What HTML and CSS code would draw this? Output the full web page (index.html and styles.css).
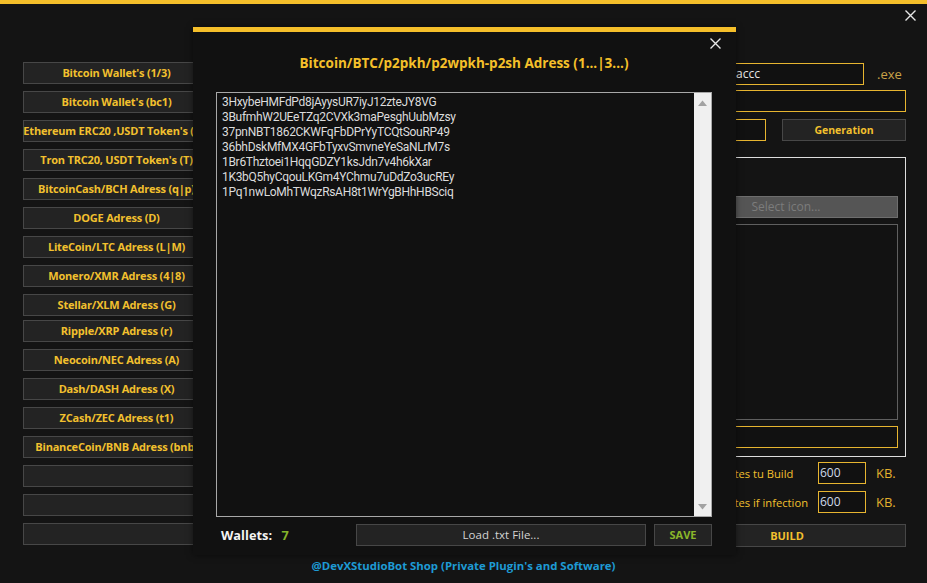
FILE: index.html
```html
<!DOCTYPE html>
<html lang="en">
<head>
<meta charset="utf-8">
<title>Builder</title>
<link rel="stylesheet" href="styles.css">
</head>
<body>
<div class="app">
  <header class="titlebar">
    <span class="win-close"><svg width="11" height="11" viewBox="0 0 11 11"><path d="M0.5 0.5 L10.5 10.5 M10.5 0.5 L0.5 10.5" stroke="#e6e6e6" stroke-width="1.4"/></svg></span>
  </header>
  <main class="content">
    <nav class="coins">
      <div class="coin">Bitcoin Wallet's (1/3)</div>
      <div class="coin">Bitcoin Wallet's (bc1)</div>
      <div class="coin">Ethereum ERC20 ,USDT Token's (0x)</div>
      <div class="coin">Tron TRC20, USDT Token's (T)</div>
      <div class="coin">BitcoinCash/BCH Adress (q|p)</div>
      <div class="coin">DOGE Adress (D)</div>
      <div class="coin">LiteCoin/LTC Adress (L|M)</div>
      <div class="coin">Monero/XMR Adress (4|8)</div>
      <div class="coin tight">Stellar/XLM Adress (G)</div>
      <div class="coin">Ripple/XRP Adress (r)</div>
      <div class="coin">Neocoin/NEC Adress (A)</div>
      <div class="coin">Dash/DASH Adress (X)</div>
      <div class="coin">ZCash/ZEC Adress (t1)</div>
      <div class="coin">BinanceCoin/BNB Adress (bnb)</div>
      <div class="coin"></div>
      <div class="coin"></div>
      <div class="coin"></div>
    </nav>
    <section class="form">
      <div class="row r1">
        <div class="field name">accc</div>
        <span class="ext">.exe</span>
      </div>
      <div class="row r2">
        <div class="field wide"></div>
      </div>
      <div class="row r3">
        <div class="field short"></div>
        <div class="btn gen">Generation</div>
      </div>
      <div class="group">
        <div class="btn select-icon">Select icon...</div>
        <div class="picture"></div>
        <div class="field icon-path"></div>
      </div>
      <div class="bytes">
        <div class="bytes-row">
          <span class="bytes-label">Add Bytes tu Build</span>
          <div class="field num">600</div>
          <span class="kb">KB.</span>
        </div>
        <div class="bytes-row">
          <span class="bytes-label">Add Bytes if infection</span>
          <div class="field num">600</div>
          <span class="kb">KB.</span>
        </div>
      </div>
      <div class="btn build">BUILD</div>
    </section>
  </main>
  <footer class="footer">@DevXStudioBot Shop (Private Plugin's and Software)</footer>

  <div class="modal">
    <div class="m-close-row">
      <span class="m-close"><svg width="11" height="11" viewBox="0 0 11 11"><path d="M0.5 0.5 L10.5 10.5 M10.5 0.5 L0.5 10.5" stroke="#e6e6e6" stroke-width="1.4"/></svg></span>
    </div>
    <h1 class="m-title">Bitcoin/BTC/p2pkh/p2wpkh-p2sh Adress (1...|3...)</h1>
    <div class="textbox">
      <div class="lines">
        <div>3HxybeHMFdPd8jAyysUR7iyJ12zteJY8VG</div>
        <div>3BufmhW2UEeTZq2CVXk3maPesghUubMzsy</div>
        <div>37pnNBT1862CKWFqFbDPrYyTCQtSouRP49</div>
        <div>36bhDskMfMX4GFbTyxvSmvneYeSaNLrM7s</div>
        <div>1Br6Thztoei1HqqGDZY1ksJdn7v4h6kXar</div>
        <div>1K3bQ5hyCqouLKGm4YChmu7uDdZo3ucREy</div>
        <div>1Pq1nwLoMhTWqzRsAH8t1WrYgBHhHBSciq</div>
      </div>
      <div class="scrollbar">
        <svg class="arrow" width="9" height="6" viewBox="0 0 9 6"><path d="M0 6 L4.5 0.5 L9 6 Z" fill="#a3a3a3"/></svg>
        <svg class="arrow" width="9" height="6" viewBox="0 0 9 6"><path d="M0 0 L4.5 5.5 L9 0 Z" fill="#a3a3a3"/></svg>
      </div>
    </div>
    <div class="m-bottom">
      <div class="wallets">Wallets: <span class="count">7</span></div>
      <div class="btn load">Load .txt File...</div>
      <div class="btn save">SAVE</div>
    </div>
  </div>
</div>
</body>
</html>
```

FILE: styles.css
```css
* { box-sizing: border-box; }

html, body {
  margin: 0;
  padding: 0;
}

body {
  width: 927px;
  height: 583px;
  overflow: hidden;
  background: #141414;
  font-family: "Open Sans", "Noto Sans", "DejaVu Sans", sans-serif;
  color: #f2c02e;
}

.app {
  position: relative;
  width: 927px;
  height: 583px;
  border-top: 4px solid #f5bf2a;
  display: flex;
  flex-direction: column;
}

.titlebar {
  height: 58px;
  display: flex;
  justify-content: flex-end;
  align-items: flex-start;
  padding: 6px 11px 0 0;
}

.win-close svg, .m-close svg { display: block; }

.content {
  display: flex;
  gap: 10px;
  padding: 0 21px 0 23px;
  height: 493px;
}

/* left coin list */
.coins {
  width: 187px;
  flex: none;
  display: flex;
  flex-direction: column;
  gap: 7px;
}

.coin {
  height: 22px;
  flex: none;
  background: #232323;
  border: 1px solid #474747;
  color: #f2c02e;
  font-weight: 700;
  font-size: 11px;
  letter-spacing: -0.2px;
  line-height: 20px;
  text-align: center;
  white-space: nowrap;
  display: flex;
  justify-content: center;
}

.coin.tight { margin-bottom: -3px; }

/* right form */
.form {
  flex: 1;
  display: flex;
  flex-direction: column;
  padding-top: 1px;
}

.row {
  display: flex;
  justify-content: flex-end;
  align-items: center;
  height: 22px;
  flex: none;
}

.r2 { margin-top: 5px; }
.r3 { margin-top: 7px; }

.field {
  height: 22px;
  border: 1px solid #e7b530;
  background: #111;
  color: #e4e4e4;
  font-size: 12px;
  line-height: 20px;
  padding: 0 3px;
  white-space: nowrap;
}

.field.name { width: 132px; }
.ext {
  width: 42px;
  padding-left: 13px;
  font-size: 13px;
  color: #c9a247;
}
.field.wide { width: 180px; }
.field.short { width: 40px; margin-right: 16px; }

.btn {
  height: 22px;
  background: #232323;
  border: 1px solid #474747;
  color: #f2c02e;
  font-weight: 700;
  font-size: 11px;
  line-height: 20px;
  text-align: center;
  white-space: nowrap;
}

.btn.gen { width: 124px; font-size: 10.5px; }

.group {
  margin-top: 16px;
  height: 300px;
  border: 1px solid #dedede;
  border-left: none;
  padding: 38px 7px 0 0;
  display: flex;
  flex-direction: column;
  align-items: flex-end;
}

.btn.select-icon {
  width: 224px;
  background: #555555;
  border-color: #6e6e6e;
  color: #7c7c7c;
  font-weight: 400;
  font-size: 12px;
}

.picture {
  width: 224px;
  height: 196px;
  margin-top: 6px;
  border: 1px solid #5f5f5f;
  background: #121212;
}

.field.icon-path {
  width: 223px;
  margin-top: 6px;
}

.bytes {
  align-self: flex-end;
  width: 208px;
  margin-top: 5px;
  display: flex;
  flex-direction: column;
  gap: 7px;
}

.bytes-row {
  display: flex;
  align-items: center;
  height: 22px;
}

.bytes-label {
  flex: 1;
  font-size: 11.2px;
  color: #f2c02e;
  white-space: nowrap;
}

.field.num {
  width: 48px;
  flex: none;
  color: #cfd9e8;
  padding: 0 1px;
  font-size: 12px;
}

.kb {
  width: 40px;
  padding-left: 10px;
  font-size: 13px;
  color: #e3b02e;
}

.btn.build {
  align-self: flex-end;
  width: 238px;
  height: 23px;
  margin-top: 11px;
  font-size: 11px;
  line-height: 21px;
}

.footer {
  text-align: center;
  font-size: 11.4px;
  font-weight: 700;
  color: #1e9bd4;
  padding-top: 3px;
}

/* modal dialog */
.modal {
  position: absolute;
  left: 193px;
  top: 23px;
  width: 543px;
  height: 528px;
  background: #111111;
  border-top: 5px solid #f5bf2a;
  padding: 0 24px 0 23px;
  display: flex;
  flex-direction: column;
  box-shadow: 0 0 6px rgba(0,0,0,0.5);
}

.m-close-row {
  height: 22px;
  display: flex;
  justify-content: flex-end;
  padding-top: 6px;
  margin-right: -9px;
}

.m-title {
  margin: 0 0 20px;
  height: 18px;
  font-size: 13.5px;
  line-height: 18px;
  font-weight: 700;
  text-align: center;
  color: #f5c02a;
}

.textbox {
  height: 425px;
  border: 1px solid #a8a8a8;
  display: flex;
  background: #111;
}

.lines {
  flex: 1;
  padding: 2px 5px;
  font-family: Roboto, "Open Sans", sans-serif;
  font-size: 12px;
  line-height: 15px;
  letter-spacing: -0.3px;
  color: #dcdcdc;
}

.scrollbar {
  width: 17px;
  background: #f0f0f0;
  display: flex;
  flex-direction: column;
  justify-content: space-between;
  align-items: center;
  padding: 7px 0 6px;
}

.m-bottom {
  margin-top: 7px;
  height: 22px;
  display: flex;
  align-items: center;
}

.wallets {
  width: 140px;
  padding-left: 5px;
  font-size: 12.8px;
  font-weight: 700;
  color: #f4f4f4;
}

.wallets .count {
  color: #84b52a;
  margin-left: 6px;
}

.btn.load {
  width: 290px;
  color: #d4d4d4;
  font-weight: 400;
  font-size: 11.5px;
}

.btn.save {
  width: 58px;
  margin-left: 8px;
  color: #8ab62a;
}
```
